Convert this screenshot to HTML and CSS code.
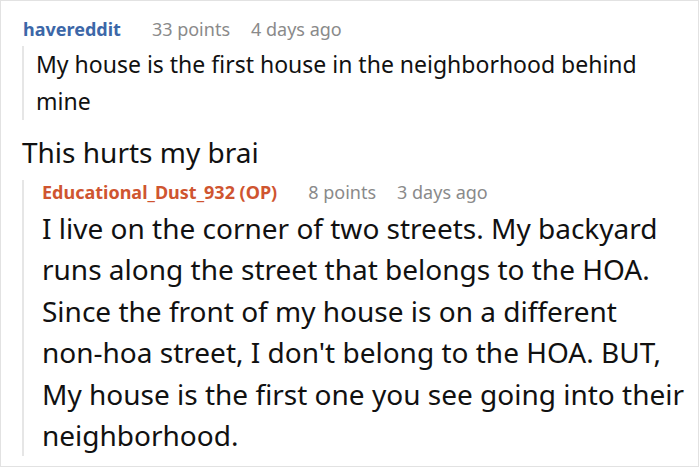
FILE: index.html
```html
<!DOCTYPE html>
<html>
<head>
<meta charset="utf-8">
<link rel="stylesheet" href="styles.css">
</head>
<body>
<div class="frame">
  <div class="head head1">
    <span class="user blue">havereddit</span>
    <span class="meta">33 points</span>
    <span class="meta">4 days ago</span>
  </div>
  <div class="quote q1">
    <p class="body1">My house is the first house in the neighborhood behind<br>mine</p>
  </div>
  <p class="reply">This hurts my brai</p>
  <div class="quote q2">
    <div class="head head2">
      <span class="user orange">Educational_Dust_932 (OP)</span>
      <span class="meta">8 points</span>
      <span class="meta">3 days ago</span>
    </div>
    <p class="body2">I live on the corner of two streets. My backyard<br>runs along the street that belongs to the HOA.<br>Since the front of my house is on a different<br>non-hoa street, I don't belong to the HOA. BUT,<br>My house is the first one you see going into their<br>neighborhood.</p>
  </div>
</div>
</body>
</html>
```

FILE: styles.css
```css
html, body {
  margin: 0;
  padding: 0;
  background: #fff;
}
.frame {
  box-sizing: border-box;
  width: 699px;
  height: 467px;
  border: 1px solid #e2e2e2;
  font-family: "Noto Sans", "Open Sans", sans-serif;
  color: #111;
  overflow: hidden;
}
.head {
  display: flex;
  gap: 21px;
  font-size: 18px;
  line-height: 24px;
  white-space: nowrap;
}
.head1 {
  margin: 16px 0 0 22px;
}
.user {
  font-weight: bold;
  margin-right: 10px;
}
.blue { color: #3c67a8; }
.orange { color: #cf5530; }
.meta { color: #8a8a8a; }
.quote {
  border-left: 2px solid #e6e6e6;
  margin-left: 21px;
}
.q1 {
  margin-top: 6px;
  padding-left: 12px;
}
.body1 {
  margin: -1px 0 0 0;
  font-size: 23px;
  line-height: 37px;
  white-space: nowrap;
}
.reply {
  margin: 12px 0 0 21px;
  font-size: 28px;
  line-height: 40px;
  white-space: nowrap;
}
.q2 {
  margin-top: 8px;
  padding-left: 18px;
}
.body2 {
  margin: 4px 0 -6px 0;
  font-size: 28px;
  line-height: 41.4px;
  white-space: nowrap;
}
```
